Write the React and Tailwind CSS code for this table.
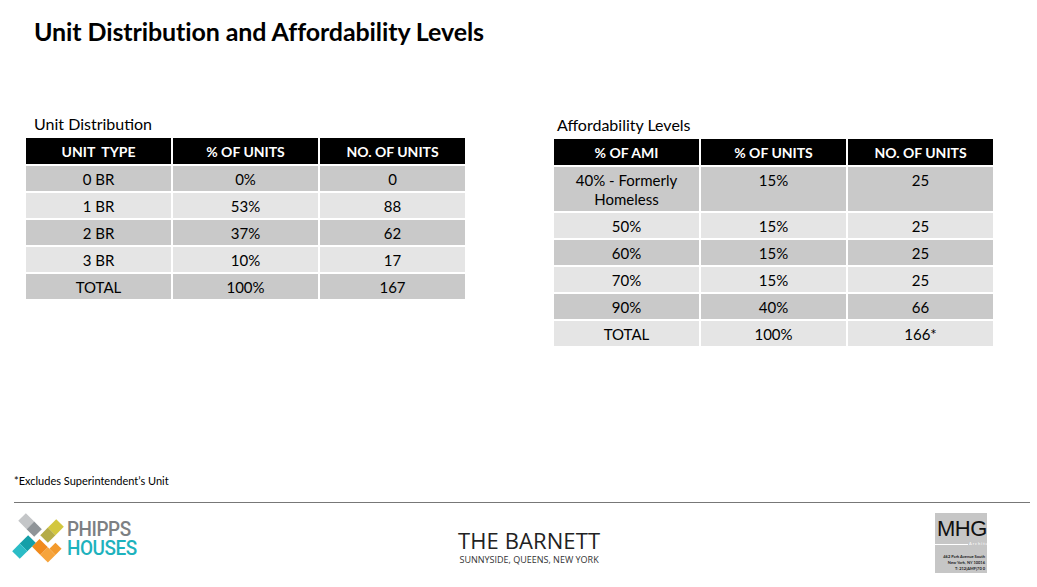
import React from 'react';

const unitRows = [
  ['0 BR', '0%', '0'],
  ['1 BR', '53%', '88'],
  ['2 BR', '37%', '62'],
  ['3 BR', '10%', '17'],
  ['TOTAL', '100%', '167'],
];

const amiRows = [
  ['40% - Formerly Homeless', '15%', '25'],
  ['50%', '15%', '25'],
  ['60%', '15%', '25'],
  ['70%', '15%', '25'],
  ['90%', '40%', '66'],
  ['TOTAL', '100%', '166*'],
];

function DataTable({ title, headers, rows, titleClass }) {
  return (
    <div className="w-[439px]">
      <div className={`${titleClass} text-[16px] leading-[20px] text-black mb-[4px]`}>{title}</div>
      <div className="grid grid-cols-3 gap-[2px] bg-white">
        {headers.map(h => (
          <div key={h} className="bg-black text-white font-bold text-[14px] h-[26px] flex items-center justify-center whitespace-pre">
            {h}
          </div>
        ))}
        {rows.map((row, i) =>
          row.map((cell, j) => (
            <div
              key={`${i}-${j}`}
              className={`${i % 2 === 0 ? 'bg-[#c9c9c9]' : 'bg-[#e5e5e5]'} text-[15px] leading-[19px] text-black text-center px-2 pt-[4px] pb-[2px] min-h-[25px]`}
            >
              {cell}
            </div>
          ))
        )}
      </div>
    </div>
  );
}

function PhippsLogo() {
  return (
    <div className="flex items-center">
      <svg width="58" height="54" viewBox="-27 -25 54 50" className="shrink-0">
        <g transform="rotate(45)">
          {/* yellow arm (up-right) */}
          <rect x="-1" y="-25" width="10" height="11" fill="#d3c73e" />
          <rect x="-1" y="-14" width="10" height="10" fill="#b5ac47" />
          {/* gray arm (up-left) */}
          <rect x="-25" y="-9" width="11" height="10" fill="#c4c6c8" />
          <rect x="-14" y="-9" width="10" height="10" fill="#8f9498" />
          {/* orange arm (down-right) */}
          <rect x="1" y="-1" width="11" height="10" fill="#f08a1c" />
          <rect x="12" y="-1" width="10" height="10" fill="#f6a43c" />
          <rect x="14" y="-9" width="8" height="8" fill="#f39a2c" />
          {/* teal arm (down-left) */}
          <rect x="-9" y="4" width="10" height="11" fill="#149fa8" />
          <rect x="-9" y="15" width="10" height="10" fill="#2bbcc6" />
        </g>
      </svg>
      <div className="text-[21px] leading-[19px] font-medium tracking-[-0.5px] scale-x-[0.9] origin-left font-['Roboto',sans-serif]">
        <div className="text-[#7d8083]">PHIPPS</div>
        <div className="text-[#1db2bd]">HOUSES</div>
      </div>
    </div>
  );
}

function MhgLogo() {
  return (
    <div className="relative w-[52px] h-[60px] bg-[#c6c6c6]">
      <div className="pl-[2px] pt-[6px] text-[22px] leading-[20px] tracking-[-0.5px] text-[#111] font-['Liberation_Sans',sans-serif]">MHG</div>
      <div className="absolute left-0 top-[31px] w-[33px] border-t border-white" />
      <div className="absolute left-[34px] top-[29px] text-[4px] leading-[4px] tracking-[1px] text-white whitespace-nowrap">Architects PC</div>
      <div className="absolute right-[2px] top-[41px] text-right text-[4px] leading-[6px] font-bold text-[#222] whitespace-nowrap">
        <div>462 Park Avenue South</div>
        <div>New York, NY 10016</div>
        <div>T: 212|AMF|70 0</div>
      </div>
    </div>
  );
}

export default function App() {
  return (
    <div className="w-[1037px] h-[587px] bg-white relative overflow-hidden font-['Lato','Noto_Sans',sans-serif] text-black">
      <div className="flex flex-col h-full">
        <h1 className="pl-[34px] pt-[16px] text-[25px] leading-[30px] font-bold tracking-[-0.1px]">
          Unit Distribution and Affordability Levels
        </h1>

        <div className="flex items-start gap-[89px] pl-[26px] pt-[68px]">
          <DataTable titleClass="pl-2" title="Unit Distribution" headers={['UNIT  TYPE', '% OF UNITS', 'NO. OF UNITS']} rows={unitRows} />
          <DataTable titleClass="pl-[3px] pt-[1px]" title="Affordability Levels" headers={['% OF AMI', '% OF UNITS', 'NO. OF UNITS']} rows={amiRows} />
        </div>

        <div className="mt-auto pl-[14px] text-[11px] leading-[14px] mb-[14px]">*Excludes Superintendent’s Unit</div>

        <div className="mx-[14px] w-[1016px] border-t border-[#777]" />

        <div className="flex items-start pl-[9px] pr-[50px] pt-[9px] h-[84px]">
          <div className="w-[449px]">
            <PhippsLogo />
          </div>
          <div className="flex flex-col items-center pt-[15px]">
            <div className="text-[22px] leading-[26px] text-[#222] tracking-[0.1px] font-['Open_Sans',sans-serif]">THE BARNETT</div>
            <div className="text-[9px] leading-[14px] text-[#333] font-['Open_Sans',sans-serif]">SUNNYSIDE, QUEENS, NEW YORK</div>
          </div>
          <div className="ml-auto pt-[1px]">
            <MhgLogo />
          </div>
        </div>
      </div>
    </div>
  );
}
